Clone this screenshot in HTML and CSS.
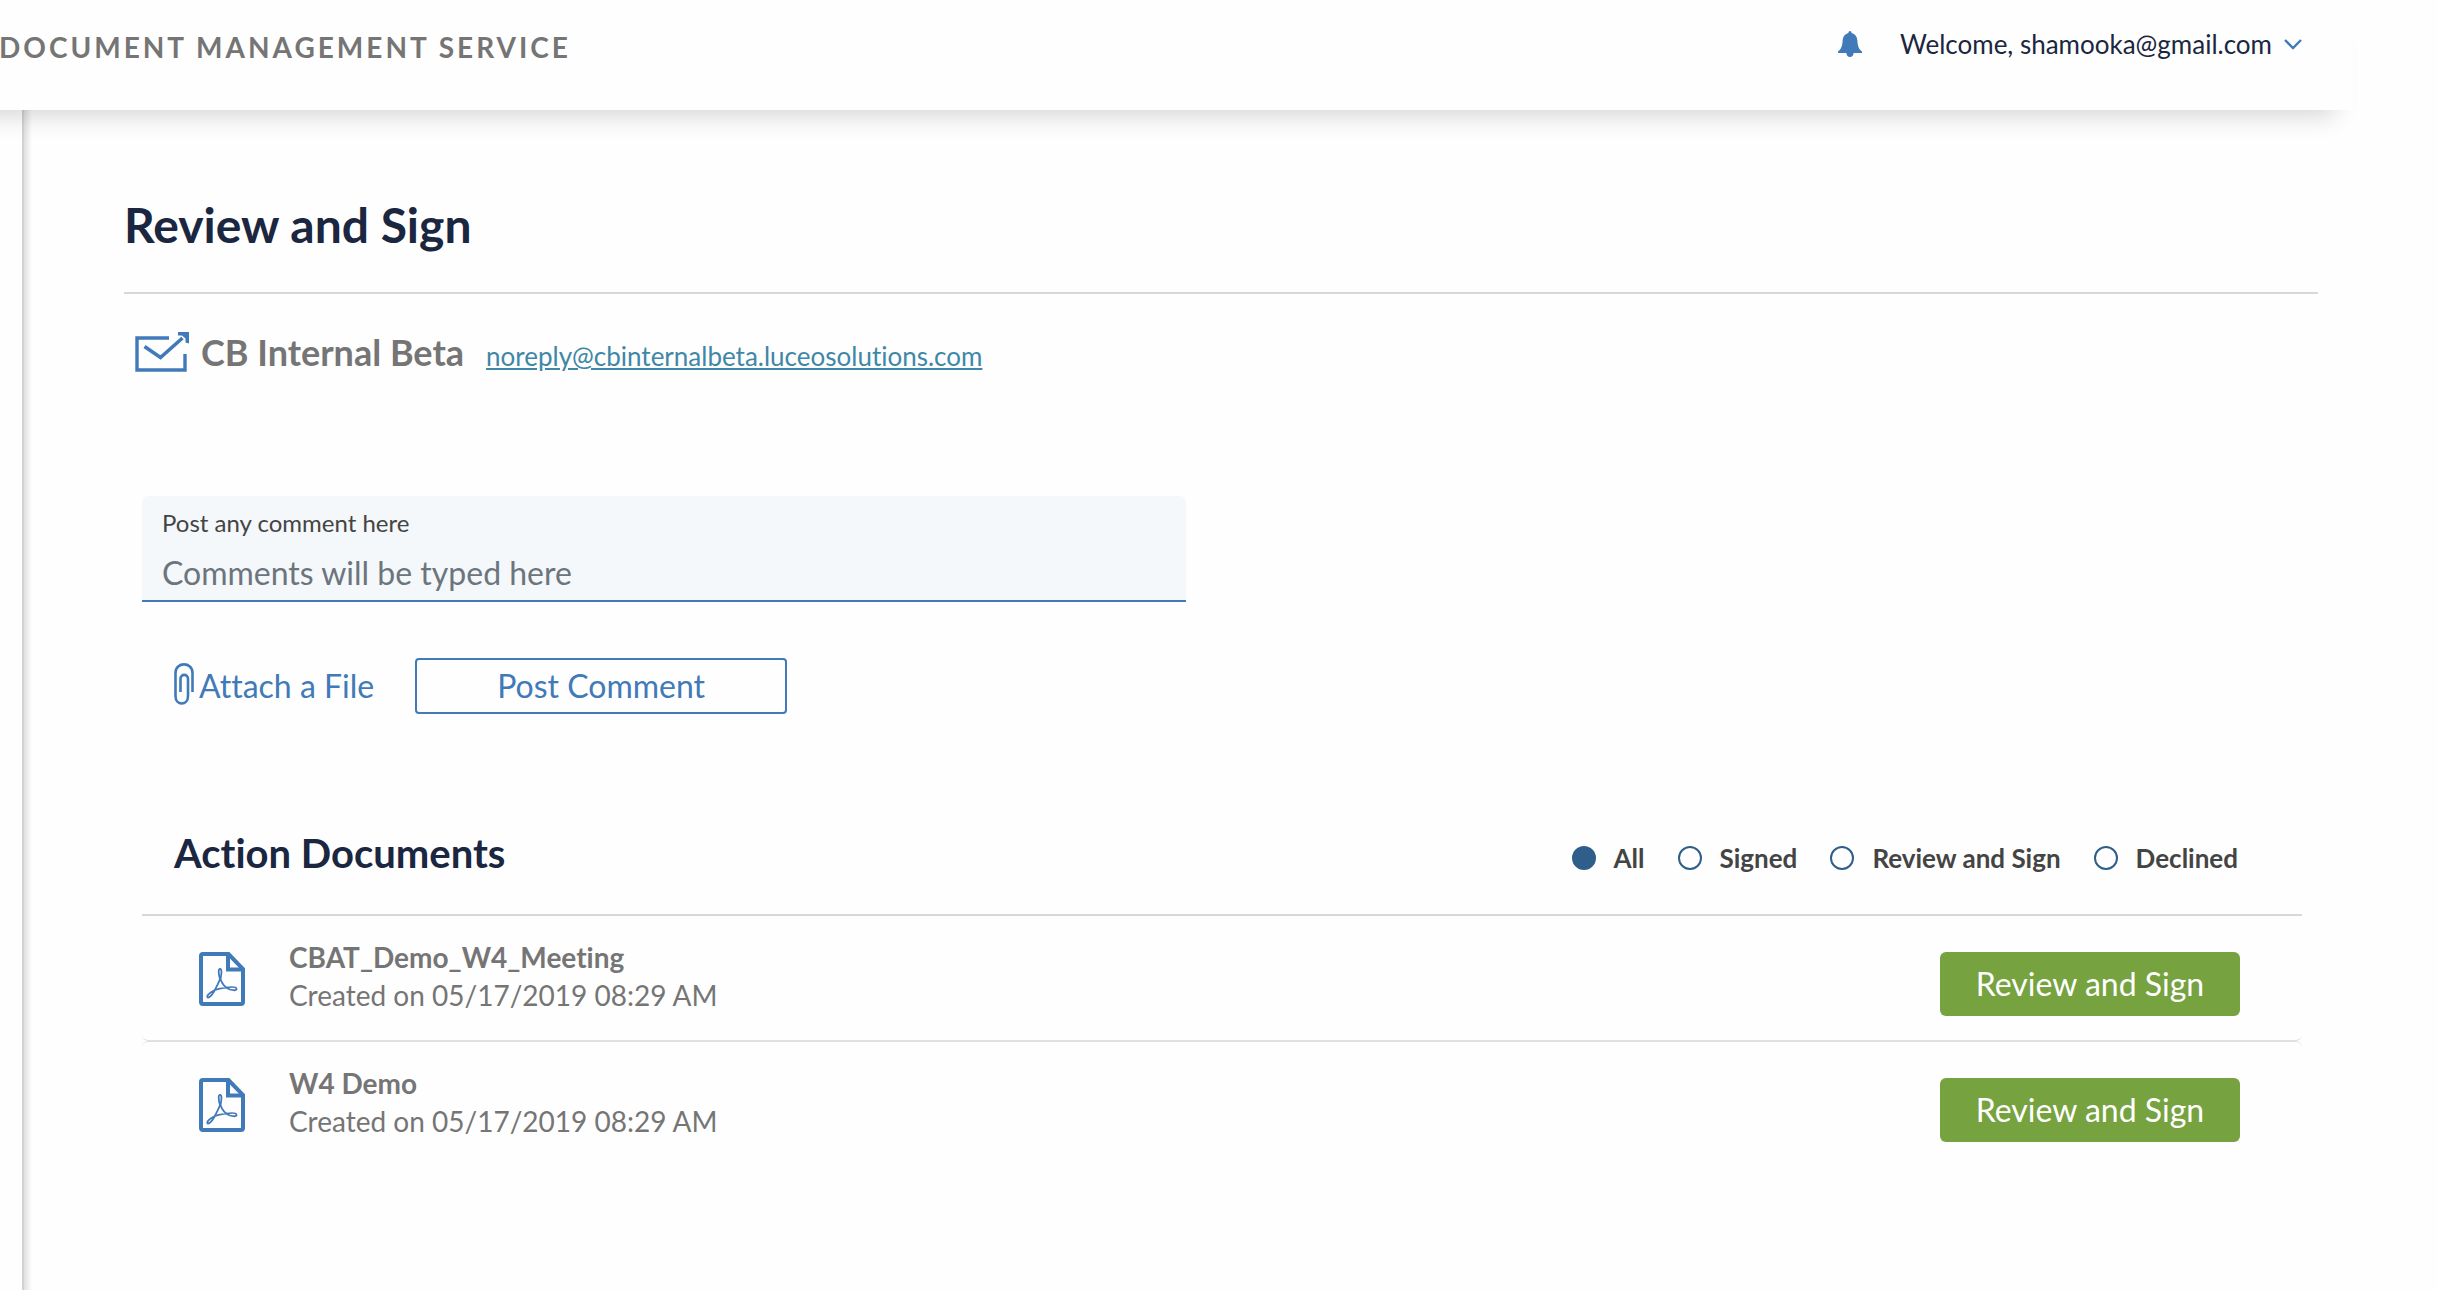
FILE: index.html
```html
<!DOCTYPE html>
<html lang="en">
<head>
<meta charset="utf-8">
<meta name="viewport" content="width=device-width, initial-scale=1">
<title>Review and Sign</title>
<link rel="stylesheet" href="styles.css">
</head>
<body>
<svg class="sprite" aria-hidden="true">
  <symbol id="pdf" viewBox="0 0 46 54">
    <path d="M4 2H29.500L44 17V50a2 2 0 0 1-2 2H4a2 2 0 0 1-2-2V4a2 2 0 0 1 2-2Z" fill="none" stroke="currentColor" stroke-width="4"/>
    <path d="M29 2V17.500H44" fill="none" stroke="currentColor" stroke-width="4"/>
    <path d="M21 27C19 20 19.500 17 21 16.800C23 17 22.700 21 21.500 27C23 32 27 36 31 37.500C36 39 38 38 37.500 36.500C37 34.500 31 35 27 35.600C22 36.300 18 37 15 38.500C10 41 7.500 44 8.500 45.200C10 46.500 13 43 15 39.500C18 34 20 30 21 27Z" fill="none" stroke="currentColor" stroke-width="1.800" stroke-linejoin="round"/>
  </symbol>
</svg>
<header class="topbar">
  <div class="brand">DOCUMENT MANAGEMENT SERVICE</div>
  <div class="account">
    <button class="bell" type="button" aria-label="Notifications">
      <svg viewBox="0 0 24 26" width="24" height="26"><path fill="currentColor" d="M12 0C13 0 13.500 .800 13.600 2C17 3 19 5.500 19.300 9C19.700 15 20.500 18 24 20.500V22H15.600C15.500 24.500 14 26 12 26S8.500 24.500 8.400 22H0V20.500C3.500 18 4.300 15 4.700 9C5 5.500 7 3 10.400 2C10.500 .800 11 0 12 0Z"/></svg>
    </button>
    <button class="user" type="button">Welcome, shamooka@gmail.com
      <svg class="chevron" viewBox="0 0 18 11" width="18" height="11"><path d="M1 1L9 9L17 1" fill="none" stroke="currentColor" stroke-width="2.400"/></svg>
    </button>
  </div>
</header>
<div class="shell">
  <main class="content">
    <h1>Review and Sign</h1>
    <div class="sender">
      <svg viewBox="0 0 54 40" width="54" height="40" fill="none" stroke="currentColor">
        <path d="M34 6H2V38H50V22" stroke-width="3.400"/>
        <path d="M9.500 14.500L25.500 25.500L47.500 6" stroke-width="3.600"/>
        <path d="M43 0H54V11.500L50.500 10.500V6.500L47 3.500H43Z" fill="currentColor" stroke="none"/>
      </svg>
      <h2 class="sender-name">CB Internal Beta</h2>
      <a class="sender-mail" href="mailto:noreply@cbinternalbeta.luceosolutions.com">noreply@cbinternalbeta.luceosolutions.com</a>
    </div>
    <form class="comment">
      <div class="field">
        <label for="comment">Post any comment here</label>
        <input id="comment" type="text" placeholder="Comments will be typed here">
      </div>
      <div class="actions">
        <button class="attach" type="button">
          <svg viewBox="0 0 20 46" width="20" height="46" fill="none" stroke="currentColor" stroke-width="2.600"><path d="M6.500 29V16C6.500 10.500 14 10.500 14 16V33C14 43 1.500 43 1.500 33V10C1.500 -1.500 18.500 -1.500 18.500 10V29"/></svg>
          Attach a File
        </button>
        <button class="post" type="button">Post Comment</button>
      </div>
    </form>
    <section class="documents">
      <div class="documents-head">
        <h2>Action Documents</h2>
        <fieldset class="filters" aria-label="Filter documents">
          <label><input type="radio" name="filter" checked>All</label>
          <label><input type="radio" name="filter">Signed</label>
          <label><input type="radio" name="filter">Review and Sign</label>
          <label><input type="radio" name="filter">Declined</label>
        </fieldset>
      </div>
      <ul class="list">
        <li>
          <svg class="pdf" width="46" height="54"><use href="#pdf"/></svg>
          <div class="info"><h3>CBAT_Demo_W4_Meeting</h3><p>Created on 05/17/2019 08:29 AM</p></div>
          <button class="sign" type="button">Review and Sign</button>
        </li>
        <li>
          <svg class="pdf" width="46" height="54"><use href="#pdf"/></svg>
          <div class="info"><h3>W4 Demo</h3><p>Created on 05/17/2019 08:29 AM</p></div>
          <button class="sign" type="button">Review and Sign</button>
        </li>
      </ul>
    </section>
  </main>
</div>
</body>
</html>
```
FILE: styles.css
```css
:root {
  --blue: #417ab8;
  --navy: #1b2640;
  --gray: #757575;
  --line: #d6d8da;
}
* { box-sizing: border-box; }
body {
  margin: 0;
  min-height: 100vh;
  display: flex;
  flex-direction: column;
  overflow-x: hidden;
  background: #fefefe;
  color: var(--gray);
  font-family: Lato, "Liberation Sans", sans-serif;
  font-variant-ligatures: none;
}
h1, h2, h3, p, ul, fieldset { margin: 0; padding: 0; }
button, input { font: inherit; font-variant-ligatures: none; }
button { padding: 0; border: 0; background: none; color: var(--blue); cursor: pointer; white-space: nowrap; }
svg { flex: none; }
.sprite { display: none; }

/* The bar bleeds off the left edge so its shadow only tapers on the right */
.topbar {
  position: relative;
  z-index: 1;
  display: flex;
  justify-content: space-between;
  height: 110px;
  margin: 0 85px 0 -60px;
  padding: 28px 51px 0 59px;
  background: #fefefe;
  box-shadow: 0 24px 24px -18px rgba(0, 0, 0, .16);
}
.brand {
  font-size: 28px;
  line-height: 38px;
  font-weight: 700;
  letter-spacing: 3px;
  white-space: nowrap;
}
.account { display: flex; align-items: center; gap: 38px; height: 32px; }
.bell { height: 28px; line-height: 0; }
.user { display: flex; align-items: center; gap: 12px; color: var(--navy); font-size: 26px; line-height: 34px; }
.chevron { color: var(--blue); }

.shell { flex: 1; display: flex; padding-left: 22px; }
.content {
  flex: 1;
  padding: 86px 120px 60px 100px;
  border-left: 2px solid #d2d2d2;
  background: linear-gradient(to right, rgba(0, 0, 0, .12), transparent 8px);
}
h1 {
  padding-bottom: 38px;
  border-bottom: 2px solid var(--line);
  color: var(--navy);
  font-size: 48px;
  line-height: 58px;
}
.sender { display: flex; align-items: center; gap: 12px; padding: 34px 0 0 11px; color: var(--blue); }
.sender-name { color: var(--gray); font-size: 36px; line-height: 48px; }
.sender-mail { margin-left: 10px; padding-top: 8px; color: #3f87a6; font-size: 26px; line-height: 32px; }

.comment { padding: 120px 0 0 18px; }
.field {
  width: 48%;
  height: 106px;
  padding: 12px 20px 0;
  border-bottom: 2px solid var(--blue);
  border-radius: 6px 6px 0 0;
  background: #f4f8fb;
}
.field label { display: block; color: #444; font-size: 24px; line-height: 30px; }
.field input { display: block; width: 100%; height: 40px; margin-top: 14px; padding: 0; border: 0; outline: 0; background: none; font-size: 32px; }
.field input::placeholder { color: #6c757d; opacity: 1; }
.actions { display: flex; align-items: center; gap: 41px; padding: 56px 0 0 32px; font-size: 32px; line-height: 40px; }
.attach { display: flex; align-items: center; gap: 5px; }
.post { width: 372px; height: 56px; border: 2px solid var(--blue); border-radius: 4px; }

.documents { margin: 104px 16px 0 18px; }
.documents-head {
  display: flex;
  align-items: center;
  justify-content: space-between;
  height: 98px;
  padding: 0 64px 26px 32px;
  border-bottom: 2px solid var(--line);
}
.documents-head h2 { color: var(--navy); font-size: 40px; line-height: 48px; }
.filters { display: flex; gap: 33px; padding-top: 10px; border: 0; }
.filters label { display: flex; align-items: center; gap: 18px; color: #444; font-size: 26px; line-height: 32px; font-weight: 700; }
.filters input { appearance: none; width: 24px; height: 24px; margin: 0; border: 2px solid #2f5e8a; border-radius: 50%; }
.filters input:checked { background: #2f5e8a; }

.list { list-style: none; }
.list li { display: flex; align-items: flex-start; height: 125px; padding: 0 62px 0 57px; border-radius: 6px; }
.list li:not(:last-child) { border-bottom: 1px solid #e0e0e0; }
.list li + li { border-top: 1px solid #e0e0e0; }
.pdf { margin-top: 36px; color: var(--blue); }
.info { flex: 1; padding: 22px 0 0 44px; font-size: 28px; line-height: 38px; }
.info h3 { font-size: 28px; }
.sign { width: 300px; height: 64px; margin-top: 36px; padding-bottom: 2px; border-radius: 6px; background: #76a240; color: #fff; font-size: 32px; }
```
